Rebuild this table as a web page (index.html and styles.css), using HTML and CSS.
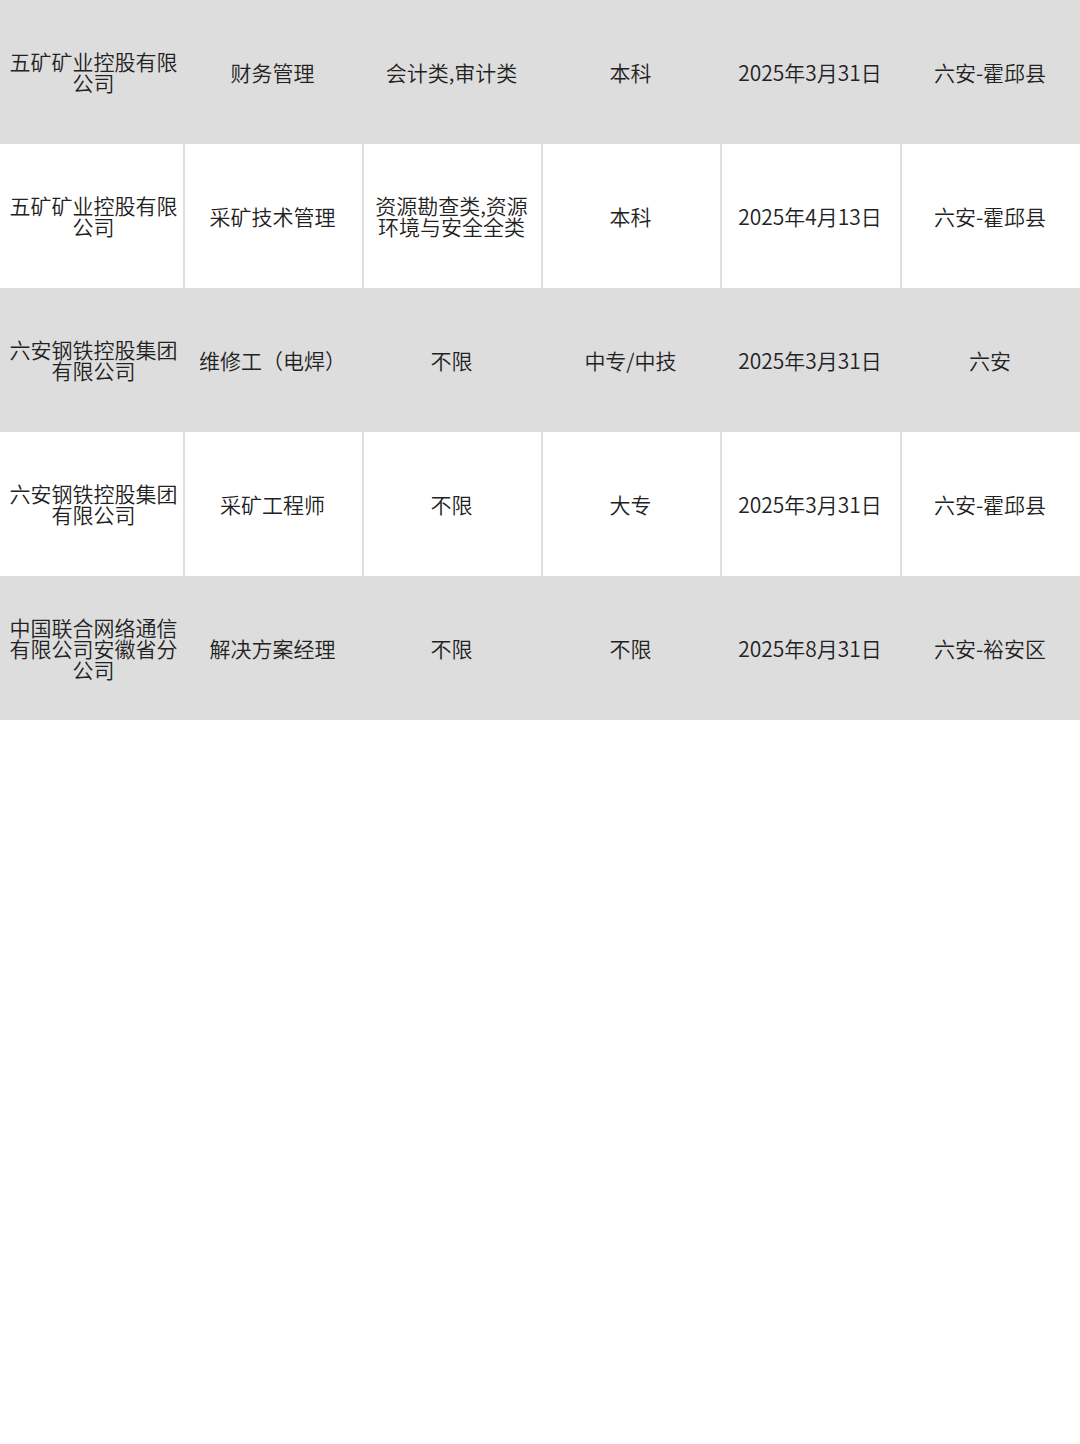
FILE: index.html
```html
<!DOCTYPE html>
<html lang="zh-CN">
<head>
<meta charset="utf-8">
<link rel="stylesheet" href="styles.css">
</head>
<body>
<div class="table">
  <div class="row gray">
    <div class="cell">五矿矿业控股有限公司</div>
    <div class="cell">财务管理</div>
    <div class="cell">会计类,审计类</div>
    <div class="cell">本科</div>
    <div class="cell">2025年3月31日</div>
    <div class="cell">六安-霍邱县</div>
  </div>
  <div class="row">
    <div class="cell">五矿矿业控股有限公司</div>
    <div class="cell">采矿技术管理</div>
    <div class="cell">资源勘查类,资源环境与安全全类</div>
    <div class="cell">本科</div>
    <div class="cell">2025年4月13日</div>
    <div class="cell">六安-霍邱县</div>
  </div>
  <div class="row gray">
    <div class="cell">六安钢铁控股集团有限公司</div>
    <div class="cell">维修工（电焊）</div>
    <div class="cell">不限</div>
    <div class="cell">中专/中技</div>
    <div class="cell">2025年3月31日</div>
    <div class="cell">六安</div>
  </div>
  <div class="row">
    <div class="cell">六安钢铁控股集团有限公司</div>
    <div class="cell">采矿工程师</div>
    <div class="cell">不限</div>
    <div class="cell">大专</div>
    <div class="cell">2025年3月31日</div>
    <div class="cell">六安-霍邱县</div>
  </div>
  <div class="row gray">
    <div class="cell">中国联合网络通信有限公司安徽省分公司</div>
    <div class="cell">解决方案经理</div>
    <div class="cell">不限</div>
    <div class="cell">不限</div>
    <div class="cell">2025年8月31日</div>
    <div class="cell">六安-裕安区</div>
  </div>
</div>
</body>
</html>
```
FILE: styles.css
```css
html, body {
  margin: 0;
  padding: 0;
  background: #ffffff;
}
body {
  width: 1080px;
  height: 1444px;
  font-family: "Noto Sans CJK SC", "Noto Sans", sans-serif;
  font-weight: 350;
  color: #222222;
}
.table {
  display: flex;
  flex-direction: column;
}
.row {
  display: grid;
  grid-template-columns: 185px 179px 179px 179px 180px 178px;
  height: 144px;
  background: #ffffff;
}
.row.gray {
  background: #dddddd;
}
.cell {
  display: flex;
  align-items: center;
  justify-content: center;
  text-align: center;
  font-size: 21px;
  line-height: 21px;
  padding: 0 7px 0 5px;
  border-right: 2px solid #dfdfdf;
  box-sizing: border-box;
  word-break: break-all;
}
.cell:first-child {
  padding: 0 4px 0 8px;
}
.row.gray .cell {
  border-right-color: #dddddd;
}
.cell:last-child {
  border-right: none;
}
```
